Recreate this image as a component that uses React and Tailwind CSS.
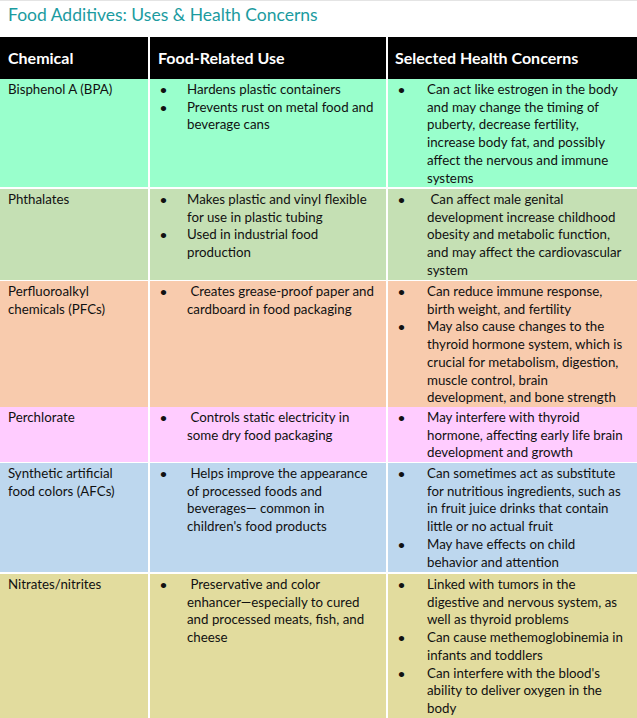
import React from 'react';

const rows = [
  {
    bg: 'bg-[#99ffcc]',
    h: 'h-[108px]',
    name: ['Bisphenol A (BPA)'],
    uses: [['Hardens plastic containers'], ['Prevents rust on metal food and', 'beverage cans']],
    concerns: [
      ['Can act like estrogen in the body', 'and may change the timing of', 'puberty, decrease fertility,', 'increase body fat, and possibly', 'affect the nervous and immune', 'systems'],
    ],
  },
  {
    bg: 'bg-[#c5e0b4]',
    h: 'h-[90px]',
    name: ['Phthalates'],
    uses: [['Makes plastic and vinyl flexible', 'for use in plastic tubing'], ['Used in industrial food', 'production']],
    concerns: [
      [' Can affect male genital', 'development increase childhood', 'obesity and metabolic function,', 'and may affect the cardiovascular', 'system'],
    ],
  },
  {
    bg: 'bg-[#f8cbad]',
    h: 'h-[124px]',
    name: ['Perfluoroalkyl', 'chemicals (PFCs)'],
    uses: [[' Creates grease-proof paper and', 'cardboard in food packaging']],
    concerns: [
      ['Can reduce immune response,', 'birth weight, and fertility'],
      ['May also cause changes to the', 'thyroid hormone system, which is', 'crucial for metabolism, digestion,', 'muscle control, brain', 'development, and bone strength'],
    ],
  },
  {
    bg: 'bg-[#ffccff]',
    h: 'h-[54px]',
    name: ['Perchlorate'],
    uses: [[' Controls static electricity in', 'some dry food packaging']],
    concerns: [['May interfere with thyroid', 'hormone, affecting early life brain', 'development and growth']],
  },
  {
    bg: 'bg-[#bdd7ee]',
    h: 'h-[109px]',
    name: ['Synthetic artificial', 'food colors (AFCs)'],
    uses: [[' Helps improve the appearance', 'of processed foods and', 'beverages\u2014 common in', "children's food products"]],
    concerns: [
      ['Can sometimes act as substitute', 'for nutritious ingredients, such as', 'in fruit juice drinks that contain', 'little or no actual fruit'],
      ['May have effects on child', 'behavior and attention'],
    ],
  },
  {
    bg: 'bg-[#e2dc9e]',
    h: 'h-[150px]',
    name: ['Nitrates/nitrites'],
    uses: [[' Preservative and color', 'enhancer\u2014especially to cured', 'and processed meats, fish, and', 'cheese']],
    concerns: [
      ['Linked with tumors in the', 'digestive and nervous system, as', 'well as thyroid problems'],
      ['Can cause methemoglobinemia in', 'infants and toddlers'],
      ["Can interfere with the blood's", 'ability to deliver oxygen in the', 'body'],
    ],
  },
];

function Bullets({ items, indent }) {
  return (
    <div className="flex flex-col">
      {items.map((lines, i) => (
        <div key={i} className="flex">
          <span className="w-[10px] shrink-0 text-[12px] font-bold">•</span>
          <div className={indent}>
            {lines.map((l, j) => (
              <div key={j} className="whitespace-pre">{l}</div>
            ))}
          </div>
        </div>
      ))}
    </div>
  );
}

export default function App() {
  return (
    <div className="w-[637px] h-[718px] overflow-hidden bg-white border-t border-[#e4e4e4]" style={{ fontFamily: 'Lato, "Open Sans", sans-serif' }}>
      <h1 className="h-[36px] pl-[8px] pt-[2px] text-[17.5px] leading-[24px] text-[#1b9ba0]">
        Food Additives: Uses &amp; Health Concerns
      </h1>
      <div className="flex flex-col gap-[2px] text-[13.3px] leading-[17.7px] text-[#111]">
        <div className="grid grid-cols-[148px_236px_1fr] gap-x-[2px] h-[42px] -mb-[2px] text-white font-bold text-[16px]">
          <div className="bg-black flex items-center pl-[8px]">Chemical</div>
          <div className="bg-black flex items-center pl-[8px]">Food-Related Use</div>
          <div className="bg-black flex items-center pl-[7px]">Selected Health Concerns</div>
        </div>
        {rows.map((r, i) => (
          <div key={i} className={`grid grid-cols-[148px_236px_1fr] gap-x-[2px] ${r.h}`}>
            <div className={`${r.bg} pl-[8px] pt-[2px]`}>
              {r.name.map((n, j) => (
                <div key={j}>{n}</div>
              ))}
            </div>
            <div className={`${r.bg} pl-[10px] pt-[2px]`}>
              <Bullets items={r.uses} indent="pl-[17px]" />
            </div>
            <div className={`${r.bg} pl-[10px] pt-[2px]`}>
              <Bullets items={r.concerns} indent="pl-[19px]" />
            </div>
          </div>
        ))}
      </div>
    </div>
  );
}
